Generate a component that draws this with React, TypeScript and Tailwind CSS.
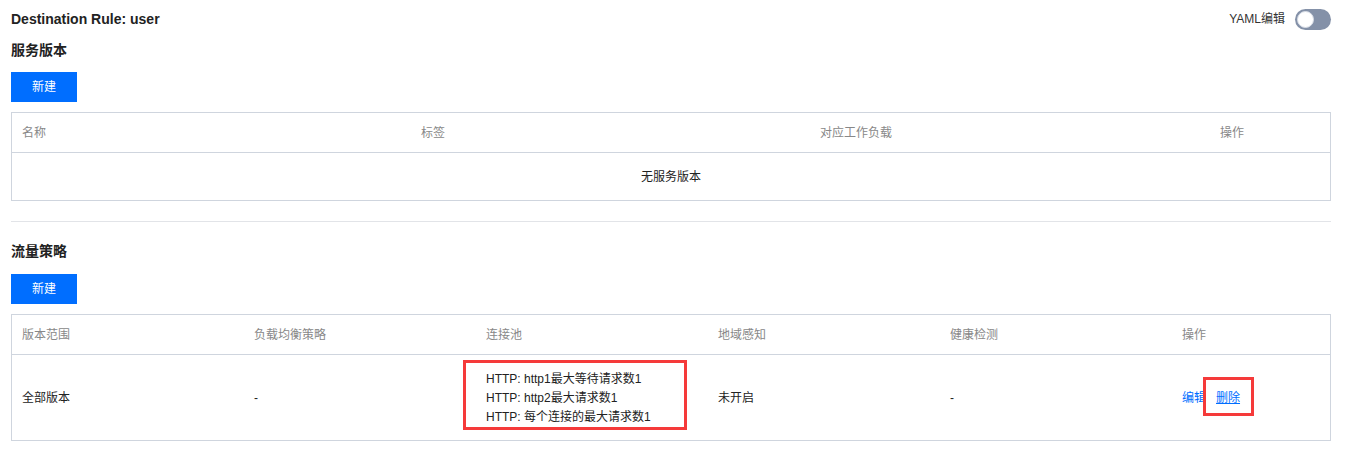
const font = { fontFamily: '"Liberation Sans", Arial, "Noto Sans CJK SC", sans-serif' };

function NewButton() {
    return (
        <button className="w-[66px] h-[30px] bg-[#006eff] text-white text-[12px] leading-[30px]">
            新建
        </button>
    );
}

export default function App() {
    return (
        <div style={font} className="w-[1348px] h-[451px] bg-white text-[12px] text-black pl-[11px] pr-[17px] pt-[9px]">
            {/* header */}
            <div className="flex items-center justify-between h-[20px]">
                <h1 className="text-[14px] font-bold leading-[20px] text-[#222]">Destination Rule: user</h1>
                <div className="flex items-center gap-[10px]">
                    <span className="text-[12px] text-[#333]">YAML编辑</span>
                    <div className="w-[36px] h-[21px] rounded-full bg-[#8491a8] p-[2px] flex items-center">
                        <div className="w-[17px] h-[17px] rounded-full bg-white border border-[#d8dde6]" />
                    </div>
                </div>
            </div>

            {/* 服务版本 */}
            <h2 className="mt-[11px] text-[14px] font-bold leading-[20px] text-[#222]">服务版本</h2>
            <div className="mt-[12px]">
                <NewButton />
            </div>
            <div className="mt-[10px] border border-[#cfd5de]">
                <div className="grid grid-cols-[399px_399px_400px_1fr] h-[40px] items-center border-b border-[#cfd5de] text-[#888]">
                    <div className="pl-[10px]">名称</div>
                    <div className="pl-[10px]">标签</div>
                    <div className="pl-[10px]">对应工作负载</div>
                    <div className="pl-[10px]">操作</div>
                </div>
                <div className="h-[47px] flex items-center justify-center text-[#222]">无服务版本</div>
            </div>

            <div className="mt-[20px] h-px bg-[#e2e4e8]" />

            {/* 流量策略 */}
            <h2 className="mt-[19px] text-[14px] font-bold leading-[20px] text-[#222]">流量策略</h2>
            <div className="mt-[13px]">
                <NewButton />
            </div>
            <div className="mt-[10px] border border-[#cfd5de]">
                <div className="grid grid-cols-[232px_232px_232px_232px_232px_1fr] h-[40px] items-center border-b border-[#cfd5de] text-[#888]">
                    <div className="pl-[10px]">版本范围</div>
                    <div className="pl-[10px]">负载均衡策略</div>
                    <div className="pl-[10px]">连接池</div>
                    <div className="pl-[10px]">地域感知</div>
                    <div className="pl-[10px]">健康检测</div>
                    <div className="pl-[10px]">操作</div>
                </div>
                <div className="grid grid-cols-[232px_232px_232px_232px_232px_1fr] h-[85px] items-center text-[#222]">
                    <div className="pl-[10px]">全部版本</div>
                    <div className="pl-[10px]">-</div>
                    <div className="pl-[10px]">
                        <div className="-ml-[23px] w-[224px] h-[70px] border-[3px] border-[#f53a3a] pl-[20px] pt-[7px] leading-[19px] -mt-[5px]">
                            <div>HTTP: http1最大等待请求数1</div>
                            <div>HTTP: http2最大请求数1</div>
                            <div>HTTP: 每个连接的最大请求数1</div>
                        </div>
                    </div>
                    <div className="pl-[10px]">未开启</div>
                    <div className="pl-[10px]">-</div>
                    <div className="pl-[10px] flex items-center gap-[10px]">
                        <a className="text-[#006eff] cursor-pointer">编辑</a>
                        <span className="relative">
                            <a className="text-[#006eff] underline cursor-pointer">删除</a>
                            <span className="absolute -left-[13px] -right-[14px] -top-[12px] -bottom-[9px] border-[3px] border-[#f53a3a]" />
                        </span>
                    </div>
                </div>
            </div>
        </div>
    );
}
